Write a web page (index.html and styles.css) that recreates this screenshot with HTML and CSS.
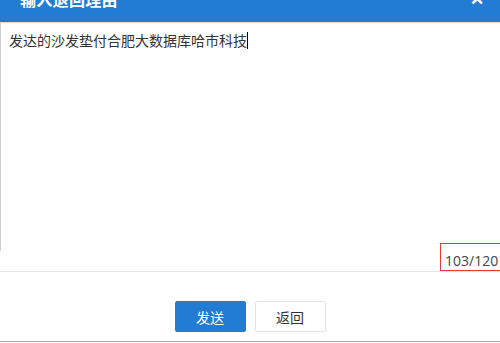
FILE: index.html
```html
<!DOCTYPE html>
<html lang="zh-CN">
<head>
<meta charset="utf-8">
<title>输入退回理由</title>
<link rel="stylesheet" href="styles.css">
</head>
<body>
<div class="dialog">
  <div class="header">
    <span class="title">输入退回理由</span>
    <span class="close">✕</span>
  </div>
  <div class="body">
    <div class="editor">
      <span class="text">发达的沙发垫付合肥大数据库哈市科技</span><span class="caret"></span>
    </div>
    <div class="counter">103/120</div>
  </div>
  <div class="footer">
    <button class="btn btn-primary">发送</button>
    <button class="btn btn-default">返回</button>
  </div>
</div>
</body>
</html>
```
FILE: styles.css
```css
html, body {
  margin: 0;
  padding: 0;
  background: #fff;
}
body {
  width: 500px;
  height: 343px;
  overflow: hidden;
  font-family: "Microsoft YaHei", "Noto Sans CJK SC", "Noto Sans", sans-serif;
}
.dialog {
  display: flex;
  flex-direction: column;
}
.header {
  height: 22px;
  background: #237cd4;
  border-bottom: 1px solid #dcdcdc;
  overflow: hidden;
  display: flex;
  justify-content: space-between;
  padding: 0 16px 0 20px;
  color: #fff;
}
.title {
  font-size: 16px;
  line-height: 22px;
  margin-top: -12px;
  font-weight: bold;
  letter-spacing: 0.3px;
}
.close {
  font-size: 17px;
  line-height: 22px;
  margin-top: -13px;
  font-weight: bold;
}
.body {
  position: relative;
  height: 248px;
  border-bottom: 1px solid #e5e5e5;
}
.editor {
  height: 228px;
  box-sizing: border-box;
  border-left: 1px solid #cfcfcf;
  padding: 7px 8px;
  font-size: 14px;
  line-height: 20px;
  color: #333;
  display: flex;
  align-items: flex-start;
}
.caret {
  display: inline-block;
  width: 1px;
  height: 17px;
  margin-top: 2px;
  background: #000;
}
.counter {
  position: absolute;
  left: 440px;
  top: 220px;
  width: 64px;
  height: 28px;
  box-sizing: border-box;
  border: 1px solid #e33b3b;
  padding-left: 4px;
  font-family: "Open Sans", "Noto Sans", sans-serif;
  font-size: 14px;
  line-height: 34px;
  color: #444;
  overflow: hidden;
  white-space: nowrap;
}
.footer {
  height: 70px;
  box-sizing: border-box;
  padding-top: 29px;
  border-bottom: 1px solid #a6a6a6;
  display: flex;
  justify-content: center;
  align-items: flex-start;
  gap: 9px;
}
.btn {
  width: 71px;
  height: 31px;
  box-sizing: border-box;
  border-radius: 2px;
  font-family: inherit;
  font-size: 14px;
  padding: 0;
  margin: 0;
}
.btn-primary {
  background: #237cd4;
  color: #fff;
  border: 1px solid #237cd4;
}
.btn-default {
  background: #fff;
  color: #333;
  border: 1px solid #e3e3e3;
}
```
